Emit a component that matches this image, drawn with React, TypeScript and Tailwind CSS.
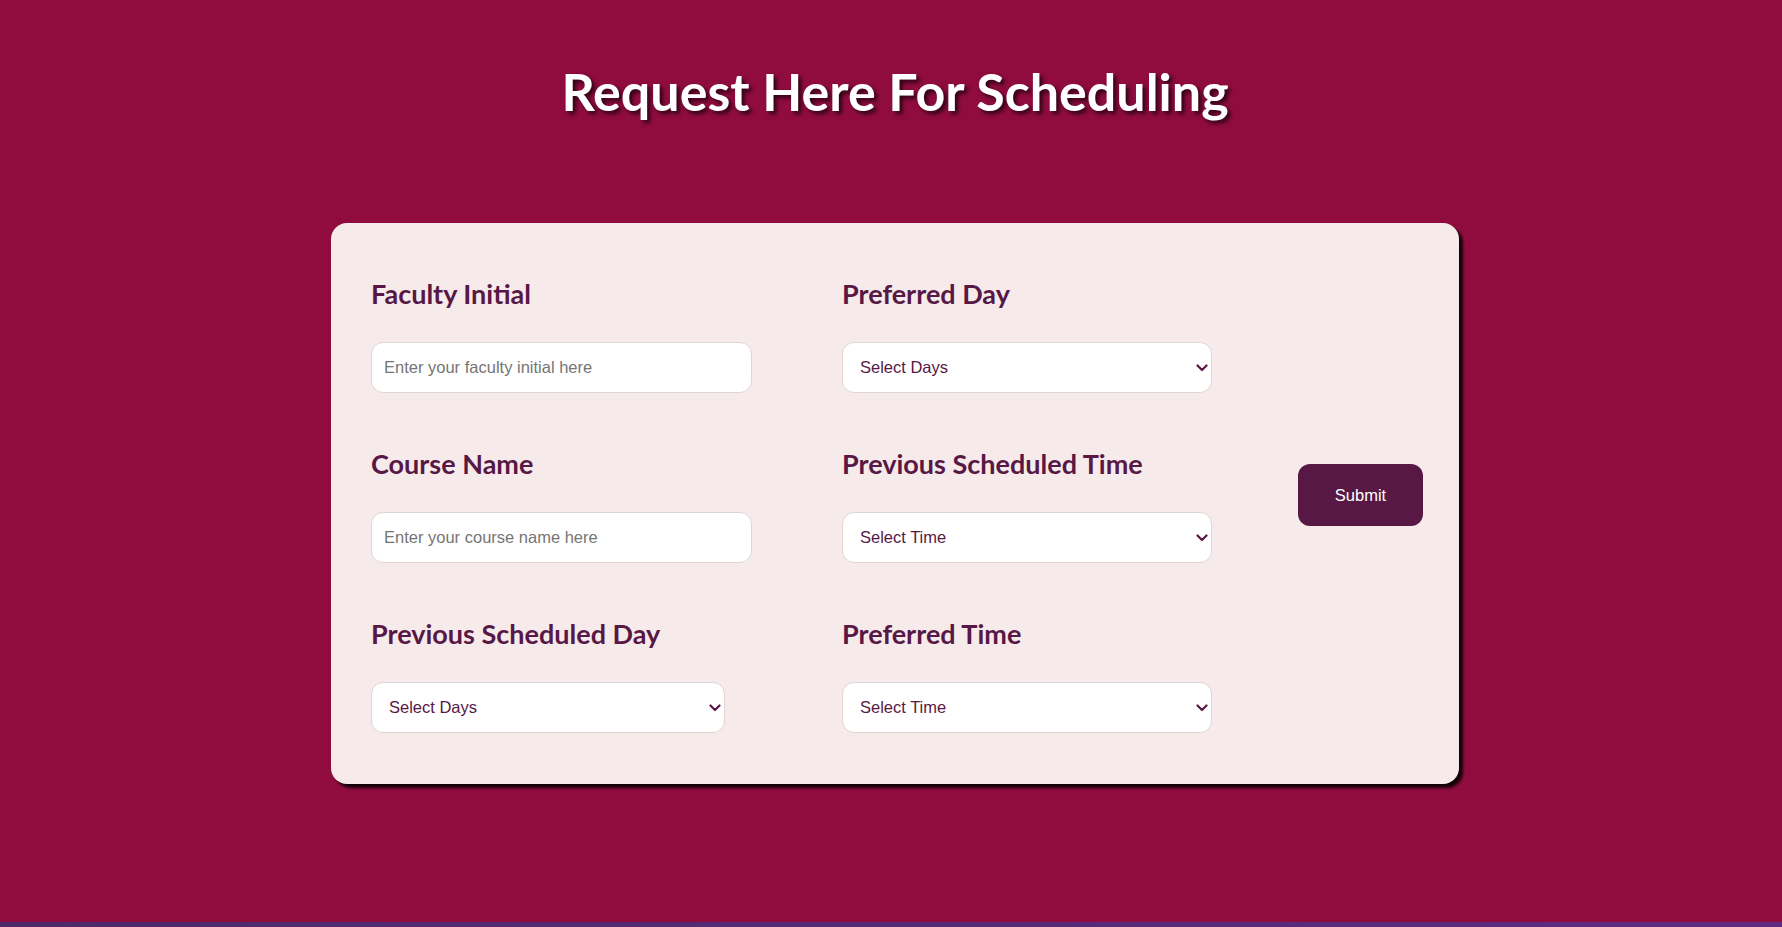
import React from "react";

const Chevron = () => (
  <svg
    className="pointer-events-none absolute right-[4px] top-1/2 -translate-y-1/2"
    width="12"
    height="8"
    viewBox="0 0 12 8"
    fill="none"
  >
    <path d="M1.5 1.5 L6 6 L10.5 1.5" stroke="#581845" strokeWidth="2.2" strokeLinecap="round" strokeLinejoin="round" />
  </svg>
);

const labelCls =
  "block text-[27px] leading-[32px] font-bold text-[#581845] font-['Lato','Noto_Sans',sans-serif]";

function TextField({ label, placeholder, width }: { label: string; placeholder: string; width: string }) {
  return (
    <div className="flex flex-col">
      <label className={labelCls}>{label}</label>
      <input
        type="text"
        placeholder={placeholder}
        className={`${width} mt-[32px] block h-[51px] rounded-[12px] border border-[#dcd6d6] bg-white pl-[12px] text-[16.5px] text-[#333] placeholder:text-[#757575] outline-none font-['Liberation_Sans',Arial,sans-serif]`}
      />
    </div>
  );
}

function SelectField({ label, text, width }: { label: string; text: string; width: string }) {
  return (
    <div className="flex flex-col">
      <label className={labelCls}>{label}</label>
      <div className={`relative ${width} mt-[32px] h-[51px]`}>
        <select
          defaultValue=""
          className="block h-[51px] w-full appearance-none rounded-[12px] border border-[#dcd6d6] bg-white pl-[17px] text-[16.5px] text-[#581845] outline-none font-['Liberation_Sans',Arial,sans-serif]"
        >
          <option value="">{text}</option>
        </select>
        <Chevron />
      </div>
    </div>
  );
}

export default function App() {
  return (
    <div className="flex h-[927px] flex-col bg-[#900C3F]">
      <main className="flex flex-1 flex-col items-center pl-[8px]">
        <h1 className="mt-[58px] text-[52px] leading-[66px] font-bold text-white [text-shadow:3px_3px_4px_rgba(0,0,0,0.7)] font-['Lato','Noto_Sans',sans-serif]">
          Request Here For Scheduling
        </h1>
        <div className="mt-[99px] flex h-[561px] w-[1128px] rounded-[16px] bg-[#F7EAEA] pl-[40px] pt-[55px] shadow-[4px_4px_3px_rgba(0,0,0,0.85)]">
          <div className="grid h-fit grid-cols-[471px_370px] gap-y-[55px]">
            <TextField label="Faculty Initial" placeholder="Enter your faculty initial here" width="w-[381px]" />
            <SelectField label="Preferred Day" text="Select Days" width="w-[370px]" />
            <TextField label="Course Name" placeholder="Enter your course name here" width="w-[381px]" />
            <SelectField label="Previous Scheduled Time" text="Select Time" width="w-[370px]" />
            <SelectField label="Previous Scheduled Day" text="Select Days" width="w-[354px]" />
            <SelectField label="Preferred Time" text="Select Time" width="w-[370px]" />
          </div>
          <button
            type="button"
            className="ml-[86px] mt-[186px] h-[62px] w-[125px] rounded-[12px] bg-[#581845] text-[16.5px] text-white font-['Liberation_Sans',Arial,sans-serif]"
          >
            Submit
          </button>
        </div>
      </main>
      <div className="h-[5px] bg-gradient-to-r from-[#4b2a6b] to-[#5e2a84]" />
    </div>
  );
}
